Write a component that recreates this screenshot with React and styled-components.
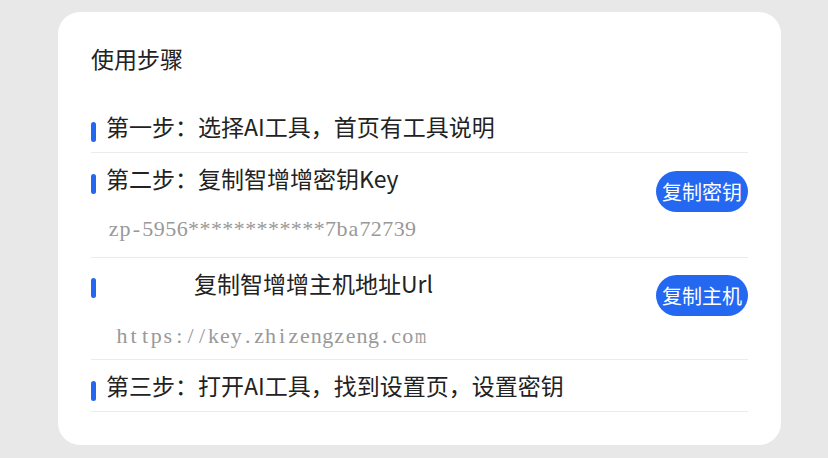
import React from 'react'
import styled, { createGlobalStyle } from 'styled-components'

const steps = [
  { label: '第一步：选择AI工具，首页有工具说明' },
  { label: '第二步：复制智增增密钥Key', sub: 'zp-5956************7ba72739', button: '复制密钥' },
  { label: '复制智增增主机地址Url', sub: 'https://key.zhizengzeng.com', button: '复制主机', indent: true },
  { label: '第三步：打开AI工具，找到设置页，设置密钥' },
]

function App() {
  return (
    <Page>
      <GlobalStyle />
      <Card>
        <Title>使用步骤</Title>
        {steps.map((step) => (
          <Step key={step.label}>
            <StepBody>
              <Head>
                <Bar />
                <Label $indent={step.indent}>{step.label}</Label>
              </Head>
              {step.sub && (
                <Sub $url={step.indent}>
                  {step.sub.split('').map((ch, i) => (
                    <Cell key={i} $wide={ch === 'm'}>{ch}</Cell>
                  ))}
                </Sub>
              )}
            </StepBody>
            {step.button && <CopyButton>{step.button}</CopyButton>}
          </Step>
        ))}
      </Card>
    </Page>
  )
}

export default App

const GlobalStyle = createGlobalStyle`
  html, body {
    margin: 0;
    padding: 0;
    background: #e8e8e8;
  }
  body {
    font-family: "Noto Sans CJK SC", "Noto Sans", sans-serif;
  }
`

const Page = styled.div`
  padding: 12px 0 13px 58px;
`

const Card = styled.div`
  width: 723px;
  box-sizing: border-box;
  background: #fff;
  border-radius: 22px;
  padding: 29px 33px 33px;
`

const Title = styled.div`
  font-size: 23px;
  line-height: 34px;
  color: #222;
  margin-bottom: 26px;
`

const Step = styled.div`
  display: flex;
  align-items: flex-start;
  padding: 8px 0 9px;
  border-bottom: 1px solid #ebebeb;
`

const StepBody = styled.div`
  flex: 1;
  min-width: 0;
`

const Head = styled.div`
  display: flex;
  align-items: flex-start;
`

const Bar = styled.span`
  flex-shrink: 0;
  width: 4.5px;
  height: 20px;
  margin-top: 12.6px;
  border-radius: 3px;
  background: #2468f2;
`

const Label = styled.span`
  margin-left: 10.5px;
  padding-left: ${(p) => (p.$indent ? '88px' : '0')};
  font-size: 23px;
  line-height: 34px;
  color: #222;
  white-space: nowrap;
`

/* serif monospace line: each glyph sits in a fixed-width cell */
const Sub = styled.div`
  margin: ${(p) => (p.$url ? '23px 0 1.5px' : '20.5px 0 6px')};
  padding-left: ${(p) => (p.$url ? '25.4px' : '16.9px')};
  font-family: "Liberation Serif", serif;
  font-size: 22px;
  line-height: 26px;
  color: #999;
  white-space: nowrap;
`

const Cell = styled.span`
  display: inline-block;
  width: 11.43px;
  text-align: center;
  transform: ${(p) => (p.$wide ? 'scaleX(0.66)' : 'none')};
`

const CopyButton = styled.button`
  flex-shrink: 0;
  margin-top: 9.5px;
  width: 92px;
  height: 41px;
  padding: 0;
  border: none;
  border-radius: 20.5px;
  background: #2468f2;
  color: #fff;
  font-family: inherit;
  font-size: 20px;
  line-height: 41px;
`
